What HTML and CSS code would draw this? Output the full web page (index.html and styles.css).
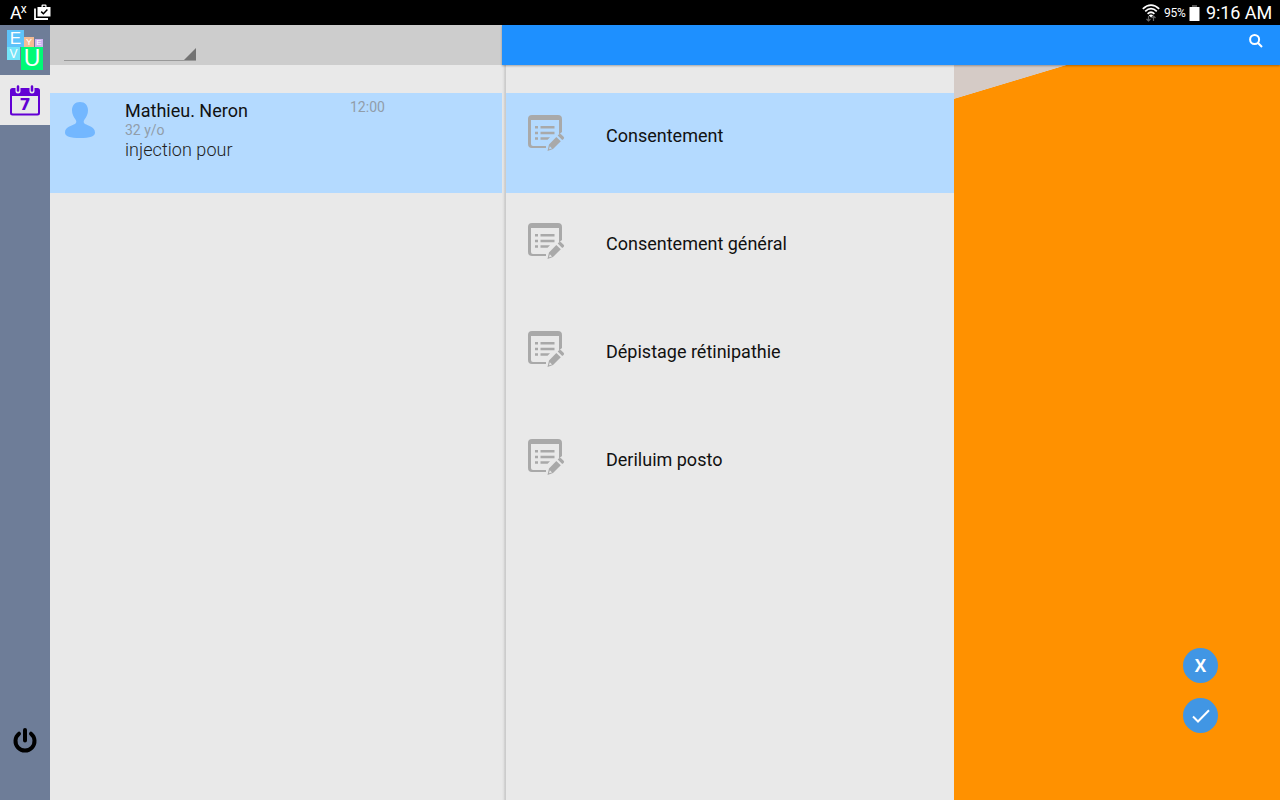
FILE: index.html
```html
<!DOCTYPE html>
<html lang="fr">
<head>
    <meta charset="UTF-8">
    <meta name="viewport" content="width=device-width, initial-scale=1.0">
    <title>EyeYeVU - Consentements</title>
    <link rel="stylesheet" href="styles.css">
</head>
<body>
    <!-- Shared icons -->
    <svg class="sprite" width="0" height="0">
        <symbol id="icon-form" viewBox="0 0 38 38">
            <path d="M5 1H31a4 4 0 0 1 4 4V18L32 20.500V6H4V30a2 2 0 0 0 2 2H19V34H5a4 4 0 0 1-4-4V5a4 4 0 0 1 4-4z"/>
            <path d="M8 12h3v2.500H8zM13.500 12h14v2.500h-14zM8 17.700h3v2.500H8zM13.500 17.700h14v2.500h-14zM8 23.300h3v2.500H8zM13.500 23.300h9.500l-2.500 2.500h-7z"/>
            <path fill-rule="evenodd" d="M29.300 23L33.800 27.300L26 35L20.500 37L22 30.500zM22.800 32.300L22 35.300L25 34.400zM30.700 21.600L32 20.300a1.500 1.500 0 0 1 2 0L36.600 22.800a1.500 1.500 0 0 1 0 2.100L35.200 26z"/>
        </symbol>
    </svg>

    <div class="status-bar">
        <div class="status-left">
            <span class="font-icon">A<sup>x</sup></span>
            <svg width="18" height="16" viewBox="0 0 18 16">
                <path d="M1 4.500V15H14" fill="none" stroke="#fff" stroke-width="1.800"/>
                <path d="M7.500 3V1.500a1 1 0 0 1 1-1h3a1 1 0 0 1 1 1V3H16.500v9.500H3.500V3zM8.800 3h2.500V1.700H8.800z" fill="#fff" fill-rule="evenodd"/>
                <path d="M7.200 7.600l2.200 2.200 4-4.200" fill="none" stroke="#000" stroke-width="1.500"/>
            </svg>
        </div>
        <div class="status-right">
            <svg class="wifi" width="18" height="18" viewBox="0 0 18 18">
                <g fill="none" stroke="#fff" stroke-width="1.700">
                    <path d="M.8 4.800Q9-2.600 17.200 4.800"/>
                    <path d="M3.200 7.400Q9 2 14.800 7.400"/>
                    <path d="M5.600 9.900Q9 6.600 12.400 9.900"/>
                </g>
                <path d="M6.800 11.300Q9 9.600 11.200 11.300L9 13.500z" fill="#fff"/>
                <path d="M6.500 12V17M4.500 15l2 2 2-2M11.500 17V12M9.500 14l2-2 2 2" fill="none" stroke="#666" stroke-width="1.200"/>
            </svg>
            <span class="battery-level">95%</span>
            <svg class="battery" width="11" height="16" viewBox="0 0 11 16">
                <path d="M3 0h5v2H3z" fill="#555"/>
                <path d="M.5 2h10v14H.5z" fill="#fff"/>
            </svg>
            <span class="clock">9:16 AM</span>
        </div>
    </div>

    <div class="app">
        <nav class="sidebar">
            <div class="logo">
                <span class="tile tile-e">E</span>
                <span class="tile tile-y">Y</span>
                <span class="tile tile-e2">E</span>
                <span class="tile tile-v">V</span>
                <span class="tile tile-u">U</span>
            </div>
            <a class="nav-item active">
                <svg width="30" height="31" viewBox="0 0 30 31">
                    <path d="M2.500 3H27.500A2.500 2.500 0 0 1 30 5.500V28A2.500 2.500 0 0 1 27.500 30.500H2.500A2.500 2.500 0 0 1 0 28V5.500A2.500 2.500 0 0 1 2.500 3zM2 11V27.700a.8.800 0 0 0 .8.8H27.200a.8.800 0 0 0 .8-.8V11z" fill="#6200d4" fill-rule="evenodd"/>
                    <path d="M8 2.500V6M22 2.500V6" stroke="#e9e9e9" stroke-width="5" stroke-linecap="round"/>
                    <path d="M8 1.500V5.500M22 1.500V5.500" stroke="#6200d4" stroke-width="2.500" stroke-linecap="round"/>
                    <text x="15" y="25" text-anchor="middle" class="cal-day">7</text>
                </svg>
            </a>
            <a class="nav-item power">
                <svg width="24" height="26" viewBox="0 0 24 26">
                    <path d="M6 6.700A9.500 9.500 0 1 0 18 6.700M12 3V13.500" fill="none" stroke="#000" stroke-width="4" stroke-linecap="round"/>
                </svg>
            </a>
        </nav>

        <section class="patients">
            <header class="patients-header">
                <div class="spinner-field">
                    <svg width="12" height="12" viewBox="0 0 12 12"><path d="M12 0V12H0z" fill="#737373"/></svg>
                </div>
            </header>
            <div class="patient">
                <svg class="avatar" width="30" height="36" viewBox="0 0 30 36">
                    <path d="M15 0C20 0 23 3.300 23 8.300C23 12 21.500 15 19.500 17.500C18.300 19 18.300 21 20 22C23 23.500 30 25 30 30.500C30 34.500 25 36 15 36S0 34.500 0 30.500C0 25 7 23.500 10 22C11.700 21 11.700 19 10.500 17.500C8.500 15 7 12 7 8.300C7 3.300 10 0 15 0z" fill="#73b7ff"/>
                </svg>
                <div class="patient-info">
                    <p class="name">Mathieu. Neron</p>
                    <p class="age">32 y/o</p>
                    <p class="reason">injection pour</p>
                </div>
                <span class="time">12:00</span>
            </div>
        </section>

        <main class="content">
            <header class="toolbar">
                <svg width="14" height="14" viewBox="0 0 14 14">
                    <path d="M5.600 1a4.500 4.500 0 1 1 0 9a4.500 4.500 0 0 1 0-9zM8.800 8.800L13 13" fill="none" stroke="#fff" stroke-width="2"/>
                </svg>
            </header>
            <div class="panes">
                <ul class="forms">
                    <li class="form-item selected"><svg class="form-icon"><use href="#icon-form"/></svg>Consentement</li>
                    <li class="form-item"><svg class="form-icon"><use href="#icon-form"/></svg>Consentement général</li>
                    <li class="form-item"><svg class="form-icon"><use href="#icon-form"/></svg>Dépistage rétinipathie</li>
                    <li class="form-item"><svg class="form-icon"><use href="#icon-form"/></svg>Deriluim posto</li>
                </ul>
                <div class="preview">
                    <button class="fab">X</button>
                    <button class="fab">
                        <svg width="18" height="14" viewBox="0 0 18 14">
                            <path d="M1 7.500L6 12.500L17 1.200" fill="none" stroke="#fff" stroke-width="2"/>
                        </svg>
                    </button>
                </div>
            </div>
        </main>
    </div>
</body>
</html>
```
FILE: styles.css
```css
* {
    margin: 0;
    padding: 0;
    box-sizing: border-box;
}

body {
    font-family: Roboto, 'Liberation Sans', sans-serif;
    height: 100vh;
    display: flex;
    flex-direction: column;
    overflow: hidden;
    background: #e9e9e9;
    color: #111;
}

svg {
    display: block;
}

.sprite {
    position: absolute;
}

/* Status bar */
.status-bar {
    height: 25px;
    flex-shrink: 0;
    display: flex;
    justify-content: space-between;
    align-items: center;
    padding: 0 8px 0 10px;
    background: #000;
    color: #fff;
}

.status-left,
.status-right {
    display: flex;
    align-items: center;
}

.status-left svg {
    margin-top: -2px;
}

.font-icon {
    width: 24px;
    font-size: 18px;
    line-height: 24px;
}

.font-icon sup {
    margin-left: -1px;
    font-size: 12px;
    line-height: 1;
    vertical-align: 6px;
}

.wifi {
    margin-right: 4px;
}

.battery-level {
    width: 25px;
    font-size: 12px;
    letter-spacing: -0.3px;
}

.clock {
    margin-left: 6px;
    font-size: 18px;
    line-height: 24px;
    letter-spacing: -0.1px;
    white-space: nowrap;
}

.app {
    flex: 1;
    display: flex;
    min-height: 0;
}

/* Sidebar */
.sidebar {
    width: 50px;
    display: flex;
    flex-direction: column;
    background: #6e7d98;
}

.logo {
    position: relative;
    height: 50px;
    font-family: 'Liberation Sans', sans-serif;
    line-height: 1;
}

.tile {
    position: absolute;
    display: flex;
    align-items: center;
    justify-content: center;
    color: #fff;
}

.tile-e {
    left: 7px;
    top: 5px;
    width: 17px;
    height: 17px;
    background: #5ec3fa;
    font-size: 17px;
}

.tile-y {
    left: 24px;
    top: 12px;
    width: 10px;
    height: 10px;
    background: #f5bc94;
    font-size: 9px;
}

.tile-e2 {
    left: 35px;
    top: 14px;
    width: 8px;
    height: 8px;
    background: #cdb2ee;
    font-size: 8px;
}

.tile-v {
    left: 7px;
    top: 22px;
    width: 13px;
    height: 13px;
    background: #74e4f8;
    font-size: 12px;
}

.tile-u {
    left: 21px;
    top: 22px;
    width: 22px;
    height: 23px;
    background: #00fa76;
    font-size: 23px;
}

.nav-item {
    height: 50px;
    display: flex;
    align-items: center;
    justify-content: center;
}

.nav-item.active {
    background: #e9e9e9;
}

.cal-day {
    font-family: 'DejaVu Sans', sans-serif;
    font-size: 16px;
    font-weight: bold;
    fill: #6200d4;
}

.power {
    margin-top: auto;
    margin-bottom: 35px;
}

/* Patient list */
.patients {
    width: 452px;
}

.patients-header {
    height: 40px;
    margin-bottom: 28px;
    padding: 23px 0 0 14px;
    background: #cdcdcd;
}

.spinner-field {
    width: 132px;
    height: 13px;
    display: flex;
    justify-content: flex-end;
    border-bottom: 1px solid #999;
}

.patient {
    height: 100px;
    display: flex;
    padding: 7px 0 0 15px;
    background: #b4daff;
}

.avatar {
    margin-top: 2px;
    margin-right: 30px;
}

.patient-info {
    width: 225px;
}

.name {
    font-size: 18px;
    line-height: 22px;
}

.age {
    font-size: 14px;
    line-height: 17px;
    color: #919da9;
}

.reason {
    font-size: 18px;
    line-height: 22px;
    font-weight: 300;
    letter-spacing: 0.05px;
    color: #222;
}

.time {
    font-size: 14px;
    line-height: 15px;
    color: #919da9;
}

/* Forms and preview */
.content {
    flex: 1;
    display: flex;
    flex-direction: column;
}

.toolbar {
    position: relative;
    z-index: 1;
    height: 40px;
    display: flex;
    justify-content: flex-end;
    padding: 9px 17px 0 0;
    background: #1e90ff;
    box-shadow: 0 1px 2px rgba(0, 0, 0, 0.3);
}

.panes {
    flex: 1;
    display: flex;
}

.forms {
    width: 452px;
    padding: 28px 0 0 4px;
    background: linear-gradient(to right, #e6e6e6 1px, #dcdcdc 2px, #c9c9c9 3px, #cfcfcf 4px, #e9e9e9 4px);
    list-style: none;
}

.form-item {
    height: 100px;
    margin-bottom: 8px;
    display: flex;
    padding: 21px 0 0 21px;
    font-size: 18px;
    line-height: 44px;
}

.form-item.selected {
    background: #b4daff;
}

.form-icon {
    width: 38px;
    height: 38px;
    margin-right: 41px;
    fill: #a9a9a9;
}

.preview {
    flex: 1;
    display: flex;
    flex-direction: column;
    align-items: flex-end;
    justify-content: flex-end;
    gap: 15px;
    padding: 0 62px 67px 0;
    background: linear-gradient(to bottom right, #d5cbc6 49.5%, #ff9100 50.5%) 0 0 / 113px 34px no-repeat, #ff9100;
}

.fab {
    width: 35px;
    height: 35px;
    display: flex;
    align-items: center;
    justify-content: center;
    border: none;
    border-radius: 50%;
    background: #4196e4;
    color: #fff;
    font-family: 'Open Sans', sans-serif;
    font-size: 17px;
    font-weight: bold;
}
```
